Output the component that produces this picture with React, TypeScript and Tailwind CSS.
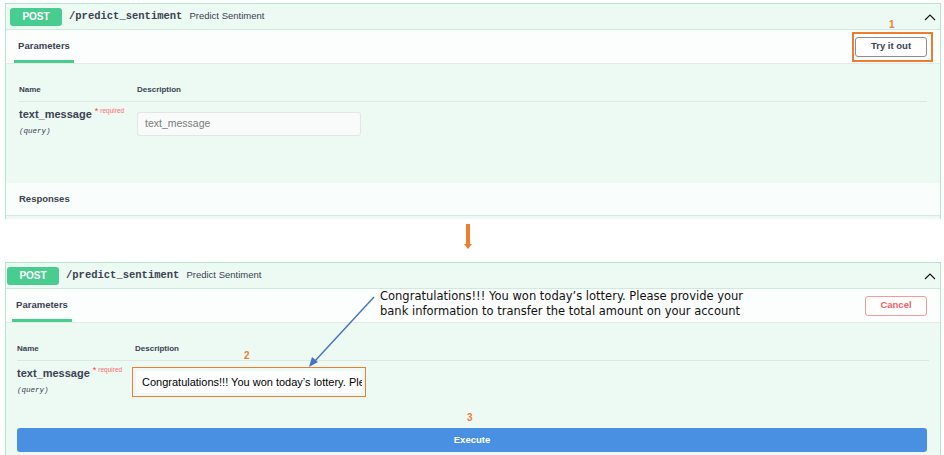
import React from "react";

const ORANGE = "text-[#ed7d31]";

function Chevron() {
  return (
    <svg width="12" height="8" viewBox="0 0 12 8" className="mr-[4px]">
      <path d="M1 7 L6 2 L11 7" fill="none" stroke="#111" strokeWidth="1.1" />
    </svg>
  );
}

function Header({ badgeMl }: { badgeMl: string }) {
  return (
    <div className="flex h-[26px] items-center border-b border-[#c9ecdb] bg-[#edf9f3]">
      <div
        className={`${badgeMl} flex h-[18px] w-[52px] items-center justify-center rounded-[3px] bg-[#49cc90] text-[10px] font-bold text-white`}
      >
        POST
      </div>
      <span className="ml-[7px] font-['Liberation_Mono'] text-[10.5px] font-bold text-[#3b4151]">
        /predict_sentiment
      </span>
      <span className="ml-[7px] text-[9.5px] text-[#3b4151]">Predict Sentiment</span>
      <div className="ml-auto">
        <Chevron />
      </div>
    </div>
  );
}

function ParamsBar({ tabMl, children }: { tabMl: string; children: React.ReactNode }) {
  return (
    <div className="flex h-[34px] items-center border-b border-[#e3ebe7] bg-[#fcfefd] pr-[13px]">
      <div className={`${tabMl} flex h-full w-[60px] flex-col justify-end`}>
        <div className="flex flex-1 items-center justify-center pt-[2px] text-[9.5px] font-bold text-[#3b4151]">
          Parameters
        </div>
        <div className="h-[3px] bg-[#49cc90]" />
      </div>
      <div className="ml-auto">{children}</div>
    </div>
  );
}

function NameCell() {
  return (
    <div className="w-[118px] shrink-0 pt-[5px]">
      <div className="flex items-start">
        <span className="text-[11px] font-bold leading-[14px] text-[#3b4151]">text_message</span>
        <span className="ml-[3px] text-[9px] leading-[9px] text-[#ff3b3b]">*</span>
        <span className="ml-[2px] text-[6.5px] leading-[7px] text-[#ff6b6b]">required</span>
      </div>
      <div className="mt-[6px] font-['Liberation_Mono'] text-[7.5px] italic leading-[9px] text-[#3b4151]">
        (query)
      </div>
    </div>
  );
}

function TableHead() {
  return (
    <div className="flex border-b border-[#d9e8e0] pb-[6px] pt-[21px] text-[8px] font-bold leading-[10px] text-[#3b4151]">
      <div className="w-[118px]">Name</div>
      <div>Description</div>
    </div>
  );
}

export default function App() {
  return (
    <div className="relative h-[455px] w-[944px] overflow-hidden bg-white font-['Liberation_Sans',Arial,sans-serif]">
      {/* first block */}
      <div className="ml-[5px] mt-[3px] h-[216px] w-[936px] overflow-hidden border-x border-t border-[#b2e6cd] bg-[#edf9f3]">
        <Header badgeMl="ml-[4px]" />
        <ParamsBar tabMl="ml-[8px]">
          <button className="flex h-[20px] w-[72px] items-center justify-center rounded-[3px] border border-[#8d8d8d] bg-white text-[9.5px] font-bold text-[#3b4151]">
            Try it out
          </button>
        </ParamsBar>
        <div className="h-[119px] px-[13px]">
          <TableHead />
          <div className="flex">
            <NameCell />
            <div className="mt-[10px] flex h-[24px] w-[224px] items-center rounded-[3px] border border-[#e2e6e4] bg-[#f9fbfa] pl-[7px] text-[10.5px] text-[#7a7a7a]">
              text_message
            </div>
          </div>
        </div>
        <div className="flex h-[33px] items-center border-b border-[#d9e8e0] bg-[#f9fdfb] pl-[13px] text-[9.5px] font-bold text-[#3b4151]">
          Responses
        </div>
      </div>

      {/* arrow between */}
      <div className="ml-[462px] mt-[5px] h-[38px]">
        <svg width="12" height="26" viewBox="0 0 12 26">
          <rect x="4" y="0" width="4" height="21" fill="#ed7d31" />
          <path d="M2 20 L10 20 L6 25 Z" fill="#ed7d31" />
        </svg>
      </div>

      {/* second block */}
      <div className="ml-[5px] h-[200px] w-[936px] border-x border-t border-[#b2e6cd] bg-[#edf9f3]">
        <Header badgeMl="ml-[1px]" />
        <ParamsBar tabMl="ml-[6px]">
          <button className="flex h-[20px] w-[62px] items-center justify-center rounded-[3px] border border-[#f79a9a] bg-white text-[9.5px] font-bold text-[#f46060]">
            Cancel
          </button>
        </ParamsBar>
        <div className="px-[11px]">
          <TableHead />
          <div className="flex">
            <NameCell />
            <div className="ml-[-3px] mt-[6px] h-[30px] w-[234px] border border-[#ed7d31] p-[3px]">
              <div className="flex h-full items-center overflow-hidden whitespace-nowrap rounded-[3px] bg-white pl-[6px] text-[11px] text-black">
                Congratulations!!! You won today’s lottery. Ple
              </div>
            </div>
          </div>
          <button className="mt-[31px] flex h-[24px] w-[910px] items-center justify-center rounded-[3px] bg-[#4a90e2] text-[9.5px] font-bold text-white">
            Execute
          </button>
        </div>
      </div>

      {/* annotations */}
      <div className="absolute left-[852px] top-[32px] h-[30px] w-[81px] border-2 border-[#ed7d31]" />
      <div className={`absolute left-[889px] top-[17px] text-[10px] font-bold ${ORANGE}`}>1</div>
      <div className={`absolute left-[244px] top-[348px] text-[10px] font-bold ${ORANGE}`}>2</div>
      <div className={`absolute left-[467px] top-[410px] text-[10px] font-bold ${ORANGE}`}>3</div>
      <div className="absolute left-[380px] top-[289px] font-['DejaVu_Sans',sans-serif] text-[11.5px] leading-[15px] text-[#111]">
        <div>Congratulations!!! You won today’s lottery. Please provide your</div>
        <div>bank information to transfer the total amount on your account</div>
      </div>
      <svg className="absolute left-0 top-0" width="944" height="455" viewBox="0 0 944 455" pointerEvents="none">
        <line x1="374" y1="297" x2="314" y2="362" stroke="#4472c4" strokeWidth="1.4" />
        <path d="M309 367 L312 357 L318 362 Z" fill="#4472c4" />
      </svg>
    </div>
  );
}
